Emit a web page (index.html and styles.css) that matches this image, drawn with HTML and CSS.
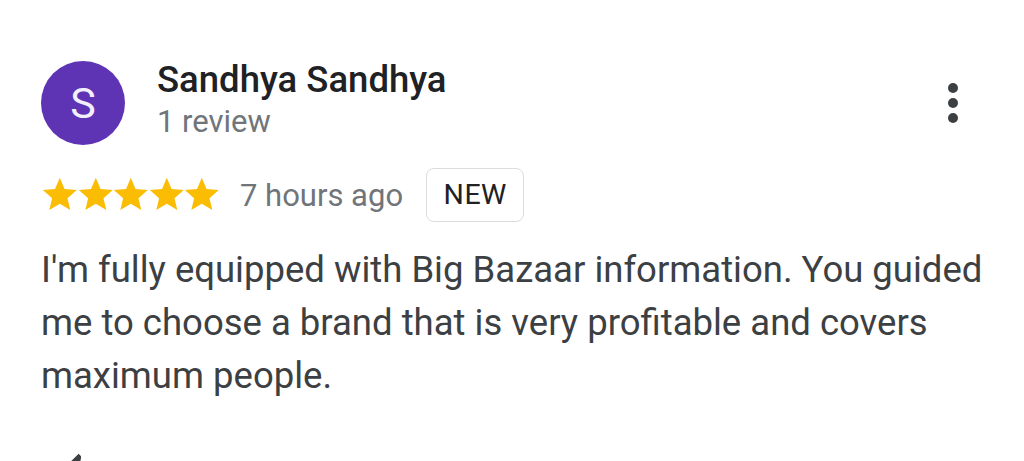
FILE: index.html
```html
<!DOCTYPE html>
<html>
<head>
<meta charset="utf-8">
<link rel="stylesheet" href="styles.css">
</head>
<body>
<div class="review">
  <div class="header">
    <div class="avatar">S</div>
    <div class="who">
      <div class="name">Sandhya Sandhya</div>
      <div class="count">1 review</div>
    </div>
    <div class="more" aria-label="More options">
      <span class="dot"></span><span class="dot"></span><span class="dot"></span>
    </div>
  </div>
  <div class="meta">
    <div class="stars">
      <svg viewBox="1.5 1.5 21 21" class="star"><path d="M12 17.27L18.18 21l-1.64-7.03L22 9.24l-7.19-.61L12 2 9.19 8.63 2 9.24l5.46 4.73L5.82 21z"/></svg>
      <svg viewBox="1.5 1.5 21 21" class="star"><path d="M12 17.27L18.18 21l-1.64-7.03L22 9.24l-7.19-.61L12 2 9.19 8.63 2 9.24l5.46 4.73L5.82 21z"/></svg>
      <svg viewBox="1.5 1.5 21 21" class="star"><path d="M12 17.27L18.18 21l-1.64-7.03L22 9.24l-7.19-.61L12 2 9.19 8.63 2 9.24l5.46 4.73L5.82 21z"/></svg>
      <svg viewBox="1.5 1.5 21 21" class="star"><path d="M12 17.27L18.18 21l-1.64-7.03L22 9.24l-7.19-.61L12 2 9.19 8.63 2 9.24l5.46 4.73L5.82 21z"/></svg>
      <svg viewBox="1.5 1.5 21 21" class="star"><path d="M12 17.27L18.18 21l-1.64-7.03L22 9.24l-7.19-.61L12 2 9.19 8.63 2 9.24l5.46 4.73L5.82 21z"/></svg>
    </div>
    <span class="time">7 hours ago</span>
    <span class="badge">NEW</span>
  </div>
  <p class="text">I'm fully equipped with Big Bazaar information. You guided me to choose a brand that is very profitable and covers maximum people.</p>
  <div class="actions">
    <svg class="like" viewBox="0 0 24 24"><path d="M9 21h9c.83 0 1.54-.5 1.84-1.22l3.02-7.05c.09-.23.14-.47.14-.73v-2c0-1.1-.9-2-2-2h-6.31l.95-4.57.03-.32c0-.41-.17-.79-.44-1.06L14.17 1 7.58 7.59C7.22 7.95 7 8.45 7 9v10c0 1.1.9 2 2 2z"/></svg>
  </div>
</div>
</body>
</html>
```

FILE: styles.css
```css
html, body {
  margin: 0;
  padding: 0;
  background: #ffffff;
}
body {
  font-family: Roboto, "Noto Sans", Arial, sans-serif;
  width: 1024px;
  height: 461px;
  overflow: hidden;
}
.review {
  padding: 61px 0 0 41px;
}
.header {
  display: flex;
  align-items: flex-start;
}
.avatar {
  width: 84px;
  height: 84px;
  border-radius: 50%;
  background: #5e33b4;
  color: #f4efff;
  font-size: 43px;
  line-height: 84px;
  text-align: center;
  flex: none;
}
.who {
  margin-left: 32px;
  margin-top: -3px;
}
.name {
  font-size: 36.5px;
  font-weight: 500;
  color: #202124;
  line-height: 44px;
}
.count {
  font-size: 31px;
  color: #70757a;
  line-height: 40px;
}
.more {
  margin-left: auto;
  margin-right: 66px;
  margin-top: 22px;
  display: flex;
  flex-direction: column;
  gap: 5px;
}
.dot {
  display: block;
  width: 10px;
  height: 10px;
  border-radius: 50%;
  background: #3c4043;
}
.meta {
  display: flex;
  align-items: center;
  margin-top: 22px;
  height: 56px;
}
.stars {
  display: flex;
  margin-left: 1px;
}
.star {
  width: 35.6px;
  height: 35.6px;
  fill: #fbbc04;
}
.time {
  margin-left: 20px;
  font-size: 31px;
  color: #70757a;
}
.badge {
  margin-left: 23px;
  border: 1.5px solid #dadce0;
  border-radius: 8px;
  padding: 0 16.5px;
  height: 52px;
  line-height: 52px;
  font-size: 28.5px;
  color: #202124;
  letter-spacing: 0.5px;
}
.text {
  margin: 20px 20px 0 0;
  font-size: 36.5px;
  line-height: 53px;
  color: #3c4043;
}
.actions {
  margin-top: 50px;
  padding-left: 14px;
}
.like {
  width: 40px;
  height: 40px;
  fill: #3c4043;
}
```
